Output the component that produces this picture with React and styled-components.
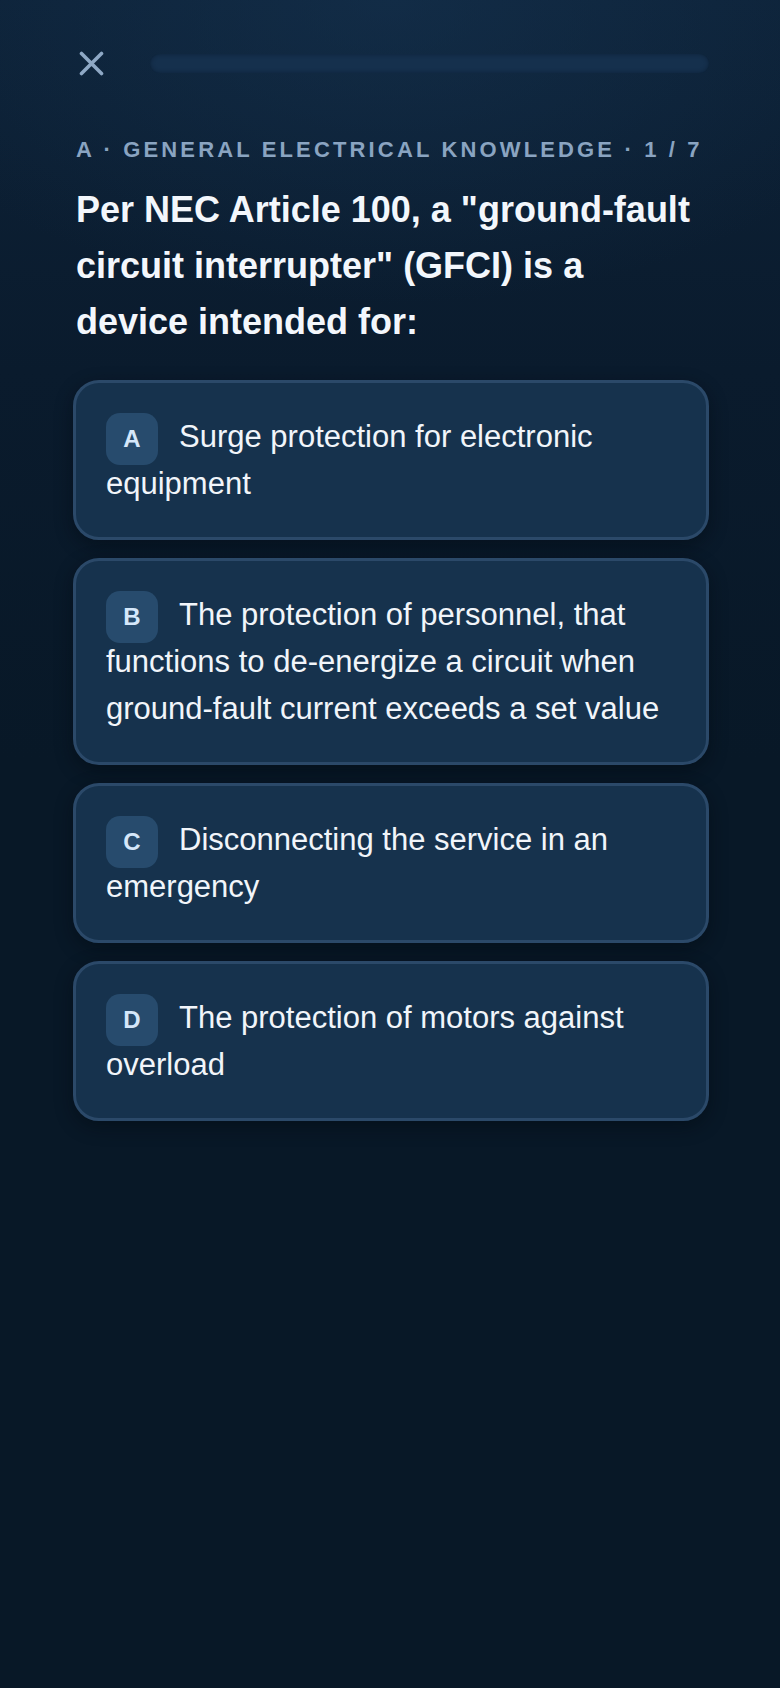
import React from "react";
import styled, { createGlobalStyle } from "styled-components";

const GlobalStyle = createGlobalStyle`
  html, body {
    margin: 0;
    padding: 0;
    background: #081827;
  }
  body {
    font-family: "Liberation Sans", Arial, sans-serif;
    -webkit-font-smoothing: antialiased;
  }
`;

const options = [
  { key: "A", text: "Surge protection for electronic equipment" },
  {
    key: "B",
    text: "The protection of personnel, that functions to de-energize a circuit when ground-fault current exceeds a set value",
  },
  { key: "C", text: "Disconnecting the service in an emergency" },
  { key: "D", text: "The protection of motors against overload" },
];

function App() {
  return (
    <>
      <GlobalStyle />
      <Page>
        <Header>
          <CloseButton aria-label="Close">
            <svg width="25" height="25" viewBox="0 0 25 25">
              <path
                d="M2.5 2.5 L22.5 22.5 M22.5 2.5 L2.5 22.5"
                stroke="#8ea8c5"
                strokeWidth="3.6"
                strokeLinecap="round"
                fill="none"
              />
            </svg>
          </CloseButton>
          <Progress>
            <ProgressFill style={{ width: `${(0 / 7) * 100}%` }} />
          </Progress>
        </Header>

        <Eyebrow>A · General Electrical Knowledge · 1 / 7</Eyebrow>
        <Question>
          Per NEC Article 100, a "ground-fault circuit interrupter" (GFCI) is a
          device intended for:
        </Question>

        <OptionList>
          {options.map((opt) => (
            <Option key={opt.key}>
              <Badge>{opt.key}</Badge>
              {opt.text}
            </Option>
          ))}
        </OptionList>
      </Page>
    </>
  );
}

const Page = styled.div`
  min-height: 100vh;
  box-sizing: border-box;
  padding: 42px 71px 60px 73px;
  background:
    radial-gradient(ellipse 70% 18% at 50% 0%, rgba(22, 52, 82, 0.55), rgba(22, 52, 82, 0) 100%),
    linear-gradient(180deg, #0d2238 0%, #0a1b2d 22%, #081827 45%, #081827 100%);
`;

const Header = styled.div`
  display: flex;
  align-items: center;
  height: 43px;
  gap: 46px;
`;

const CloseButton = styled.button`
  display: flex;
  align-items: center;
  border: none;
  background: none;
  padding: 0 0 0 6px;
  margin: 0;
  cursor: pointer;
`;

const Progress = styled.div`
  flex: 1;
  height: 19px;
  border-radius: 10px;
  background: #15304d;
  box-shadow: inset 0 0 4px rgba(5, 15, 28, 0.45);
  overflow: hidden;
`;

const ProgressFill = styled.div`
  height: 100%;
  background: #3b82c4;
  border-radius: 10px;
`;

const Eyebrow = styled.div`
  margin-top: 52px;
  padding-left: 3px;
  font-size: 22px;
  line-height: 26px;
  font-weight: 700;
  letter-spacing: 3.15px;
  text-transform: uppercase;
  color: #8aa4c1;
  white-space: nowrap;
`;

const Question = styled.h1`
  margin: 19px 0 0;
  padding: 0 10px 0 3px;
  font-size: 36px;
  line-height: 56px;
  font-weight: 700;
  color: #f3f7fc;
`;

const OptionList = styled.div`
  display: flex;
  flex-direction: column;
  gap: 18px;
  margin-top: 30px;
`;

const Option = styled.div`
  box-sizing: border-box;
  padding: 30px 30px 30px;
  border: 3px solid #2b4969;
  border-radius: 26px;
  background: #16324d;
  box-shadow: 0 6px 18px rgba(2, 8, 16, 0.45);
  font-size: 31px;
  line-height: 47px;
  color: #f1f5fa;
  cursor: pointer;
`;

const Badge = styled.span`
  display: inline-flex;
  align-items: center;
  justify-content: center;
  vertical-align: bottom;
  width: 52px;
  height: 52px;
  margin: 0 21px -5px 0;
  border-radius: 14px;
  background: #274b6d;
  color: #d5e7fa;
  font-size: 24px;
  line-height: 1;
  font-weight: 700;
`;

export default App;
